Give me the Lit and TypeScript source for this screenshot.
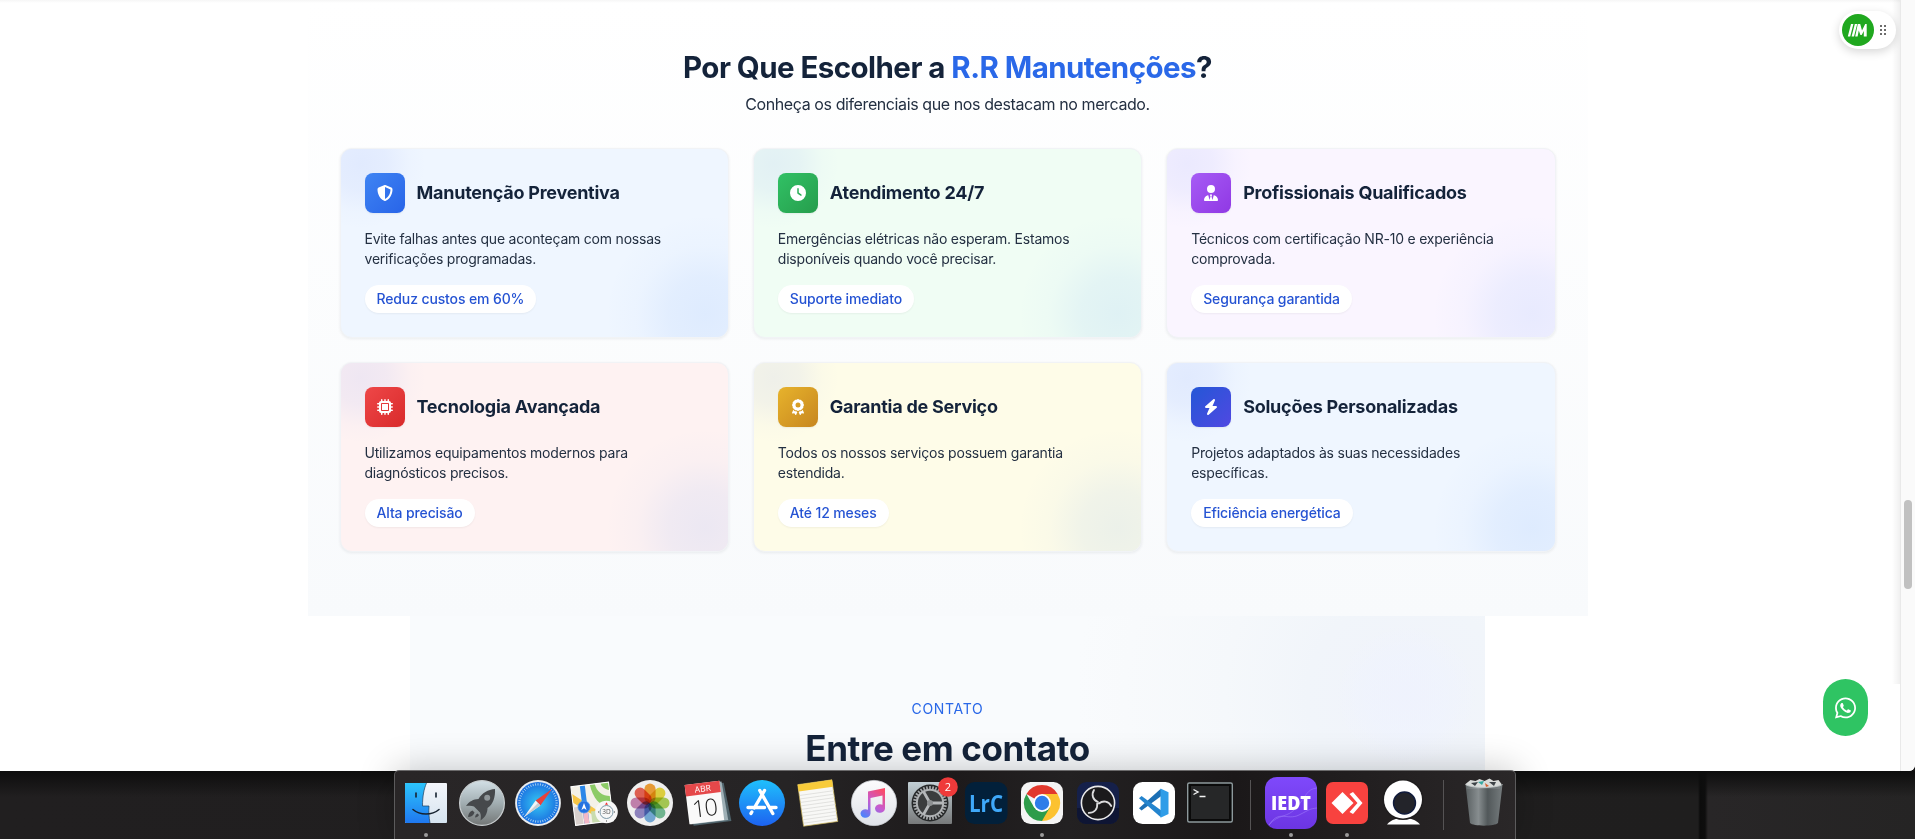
import { LitElement, html, svg, css } from "lit";
import { customElement, property } from "lit/decorators.js";
import { classMap } from "lit/directives/class-map.js";

const ICONS: Record<string, { w: number; d: string }> = {
  shield: { w: 512, d: "M256 0c4.6 0 9.2 1 13.4 2.9L457.7 82.8c22 9.3 38.4 31 38.3 57.2c-.5 99.2-41.3 280.7-213.6 363.2c-16.7 8-36.1 8-52.8 0C57.3 420.7 16.5 239.2 16 140c-.1-26.2 16.3-47.9 38.3-57.2L242.7 2.9C246.8 1 251.4 0 256 0zm0 66.8V444.8C394 378 431.1 230.1 432 141.4L256 66.8l0 0z" },
  clock: { w: 512, d: "M256 0a256 256 0 1 1 0 512A256 256 0 1 1 256 0zM232 120V256c0 8 4 15.5 10.7 20l96 64c11 7.4 25.9 4.4 33.3-6.7s4.4-25.9-6.7-33.3L280 243.2V120c0-13.3-10.7-24-24-24s-24 10.7-24 24z" },
  tie: { w: 448, d: "M96 128a128 128 0 1 0 256 0A128 128 0 1 0 96 128zm94.5 200.2l18.6 31L175.8 483.1l-36-146.9c-2-8.1-9.8-13.4-17.9-11.3C51.9 342.4 0 405.8 0 481.3c0 17 13.8 30.7 30.7 30.7H162.5c0 0 0 0 .1 0H168 280h5.5c0 0 0 0 .1 0H417.3c17 0 30.7-13.8 30.7-30.7c0-75.5-51.9-138.9-121.9-156.4c-8.1-2-15.9 3.3-17.9 11.3l-36 146.9L238.9 359.2l18.6-31c6.4-10.7-1.3-24.2-13.7-24.2H224 204.3c-12.4 0-20.1 13.6-13.7 24.2z" },
  chip: { w: 512, d: "M176 24c0-13.3-10.7-24-24-24s-24 10.7-24 24V64c-35.3 0-64 28.7-64 64H24c-13.3 0-24 10.7-24 24s10.7 24 24 24H64v56H24c-13.3 0-24 10.7-24 24s10.7 24 24 24H64v56H24c-13.3 0-24 10.7-24 24s10.7 24 24 24H64c0 35.3 28.7 64 64 64v40c0 13.3 10.7 24 24 24s24-10.7 24-24V448h56v40c0 13.3 10.7 24 24 24s24-10.7 24-24V448h56v40c0 13.3 10.7 24 24 24s24-10.7 24-24V448c35.3 0 64-28.7 64-64h40c13.3 0 24-10.7 24-24s-10.7-24-24-24H448V280h40c13.3 0 24-10.7 24-24s-10.7-24-24-24H448V176h40c13.3 0 24-10.7 24-24s-10.7-24-24-24H448c0-35.3-28.7-64-64-64V24c0-13.3-10.7-24-24-24s-24 10.7-24 24V64H280V24c0-13.3-10.7-24-24-24s-24 10.7-24 24V64H176V24zM160 128H352c17.7 0 32 14.3 32 32V352c0 17.7-14.3 32-32 32H160c-17.7 0-32-14.3-32-32V160c0-17.7 14.3-32 32-32zm192 32H160V352H352V160z" },
  award: { w: 384, d: "M173.8 5.5c11-7.3 25.4-7.3 36.4 0L228 17.2c6 3.9 13 5.8 20.1 5.4l21.3-1.3c13.2-.8 25.6 6.4 31.5 18.2l9.6 19.1c3.2 6.4 8.4 11.5 14.7 14.7L344.5 83c11.8 5.9 19 18.3 18.2 31.5l-1.3 21.3c-.4 7.1 1.5 14.2 5.4 20.1l11.8 17.8c7.3 11 7.3 25.4 0 36.4L366.8 228c-3.9 6-5.8 13-5.4 20.1l1.3 21.3c.8 13.2-6.4 25.6-18.2 31.5l-19.1 9.6c-6.4 3.2-11.5 8.4-14.7 14.7L301 344.5c-5.9 11.8-18.3 19-31.5 18.2l-21.3-1.3c-7.1-.4-14.2 1.5-20.1 5.4l-17.8 11.8c-11 7.3-25.4 7.3-36.4 0L156 366.8c-6-3.9-13-5.8-20.1-5.4l-21.3 1.3c-13.2 .8-25.6-6.4-31.5-18.2l-9.6-19.1c-3.2-6.4-8.4-11.5-14.7-14.7L39.5 301c-11.8-5.9-19-18.3-18.2-31.5l1.3-21.3c.4-7.1-1.5-14.2-5.4-20.1L5.5 210.2c-7.3-11-7.3-25.4 0-36.4L17.2 156c3.9-6 5.8-13 5.4-20.1l-1.3-21.3c-.8-13.2 6.4-25.6 18.2-31.5l19.1-9.6C65 70.2 70.2 65 73.4 58.6L83 39.5c5.9-11.8 18.3-19 31.5-18.2l21.3 1.3c7.1 .4 14.2-1.5 20.1-5.4L173.8 5.5zM272 192a80 80 0 1 0 -160 0 80 80 0 1 0 160 0zM1.3 441.8L44.4 339.3c.2 .1 .3 .2 .4 .4l9.6 19.1c11.7 23.2 36 37.3 62 35.8l21.3-1.3c.2 0 .5 0 .7 .2l17.8 11.8c5.1 3.3 10.5 5.9 16.1 7.7l-37.6 89.3c-2.3 5.5-7.4 9.2-13.3 9.7s-11.6-2.2-14.8-7.2L74.4 455.5l-56.1 8.3c-5.7 .8-11.4-1.5-15-6s-4.3-10.7-2.1-16zm248 60.4L211.7 413c5.6-1.8 11-4.3 16.1-7.7l17.8-11.8c.2-.1 .4-.2 .7-.2l21.3 1.3c26 1.5 50.3-12.6 62-35.8l9.6-19.1c.1-.2 .2-.3 .4-.4l43.2 102.5c2.2 5.3 1.4 11.4-2.1 16s-9.3 6.9-15 6l-56.1-8.3-32.2 49.2c-3.2 5-8.9 7.7-14.8 7.2s-11-4.3-13.3-9.7z" },
  bolt: { w: 448, d: "M349.4 44.6c5.9-13.7 1.5-29.7-10.6-38.5s-28.6-8-39.9 1.8l-256 224c-10 8.8-13.6 22.9-8.9 35.3S50.7 288 64 288H175.5L98.6 467.4c-5.9 13.7-1.5 29.7 10.6 38.5s28.6 8 39.9-1.8l256-224c10-8.8 13.6-22.9 8.9-35.3s-16.6-20.7-30-20.7H272.5L349.4 44.6z" },
};

const CARDS = [
  { tone: "blue", icon: "shield", title: "Manutenção Preventiva", text: "Evite falhas antes que aconteçam com nossas verificações programadas.", tag: "Reduz custos em 60%" },
  { tone: "green", icon: "clock", title: "Atendimento 24/7", text: "Emergências elétricas não esperam. Estamos disponíveis quando você precisar.", tag: "Suporte imediato" },
  { tone: "purple", icon: "tie", title: "Profissionais Qualificados", text: "Técnicos com certificação NR-10 e experiência comprovada.", tag: "Segurança garantida" },
  { tone: "red", icon: "chip", title: "Tecnologia Avançada", text: "Utilizamos equipamentos modernos para diagnósticos precisos.", tag: "Alta precisão" },
  { tone: "yellow", icon: "award", title: "Garantia de Serviço", text: "Todos os nossos serviços possuem garantia estendida.", tag: "Até 12 meses" },
  { tone: "indigo", icon: "bolt", title: "Soluções Personalizadas", text: "Projetos adaptados às suas necessidades específicas.", tag: "Eficiência energética" },
];

@customElement("feature-card")
class FeatureCard extends LitElement {
  @property() tone = "blue";
  @property() icon = "shield";
  @property() heading = "";
  @property() text = "";
  @property() tag = "";

  static styles = css`
    :host { display: block; }
    .card {
      position: relative; overflow: hidden; box-sizing: border-box; height: 190px;
      padding: 24px; border: 1px solid #f1f3f6; border-radius: 12px;
      box-shadow: 0 1px 3px rgba(15, 23, 42, 0.07);
    }
    .glow { position: absolute; border-radius: 50%; }
    .glow.start {
      width: 130px; height: 130px; left: -45px; top: -50px;
      background: radial-gradient(circle closest-side, rgba(90, 120, 245, 0.095), rgba(90, 120, 245, 0.07) 40%, rgba(90, 120, 245, 0.016) 75%, transparent);
    }
    .glow.end {
      width: 210px; height: 210px; right: -82px; bottom: -82px;
      background: radial-gradient(circle closest-side, rgba(59, 130, 246, 0.095), rgba(59, 130, 246, 0.07) 35%, rgba(59, 130, 246, 0.018) 65%, transparent 95%);
    }
    .body { position: relative; display: flex; flex-direction: column; align-items: flex-start; gap: 16px; }
    .head { display: flex; align-items: center; gap: 12px; }
    .tile {
      display: flex; align-items: center; justify-content: center;
      width: 40px; height: 40px; border-radius: 8px; box-shadow: 0 1px 2px rgba(0, 0, 0, 0.06);
    }
    .tile svg { display: block; height: 16px; fill: #fff; fill-rule: nonzero; }
    .title { margin: 0; font-size: 18px; line-height: 28px; font-weight: 700; letter-spacing: -0.25px; color: #14233a; white-space: nowrap; }
    .text { margin: 0; width: 320px; font-size: 14px; line-height: 20px; letter-spacing: -0.21px; color: #243042; }
    .tag {
      font-size: 14px; line-height: 20px; padding: 4px 12px; border-radius: 14px; letter-spacing: -0.13px;
      font-weight: 500; color: #2553d3; background: #fff; box-shadow: 0 1px 2px rgba(0, 0, 0, 0.05);
    }
    .blue, .indigo { background: #eff6ff; }
    .green { background: #f0fdf4; }
    .purple { background: #faf5ff; }
    .red { background: #fef2f2; }
    .yellow { background: #fefce8; }
    .blue .tile { background: linear-gradient(135deg, #3f84f3, #2864e8); }
    .green .tile { background: linear-gradient(135deg, #31c165, #269d4c); }
    .purple .tile { background: linear-gradient(135deg, #a65cf5, #9038e4); }
    .red .tile { background: linear-gradient(135deg, #ee4748, #d92a2b); }
    .yellow .tile { background: linear-gradient(135deg, #e7b32c, #c7861f); }
    .indigo .tile { background: linear-gradient(135deg, #2457d6, #5048e2); }
  `;

  render() {
    const icon = ICONS[this.icon];
    return html`
      <article class="card ${this.tone}">
        <div class="glow start"></div>
        <div class="glow end"></div>
        <div class="body">
          <div class="head">
            <div class="tile"><svg viewBox="0 0 ${icon.w} 512"><path d=${icon.d}></path></svg></div>
            <h3 class="title">${this.heading}</h3>
          </div>
          <p class="text">${this.text}</p>
          <span class="tag">${this.tag}</span>
        </div>
      </article>
    `;
  }
}

const ticks = (n: number, r1: number, r2: number) =>
  Array.from({ length: n }, (_, i) => {
    const a = (i / n) * Math.PI * 2;
    const c = Math.cos(a);
    const s = Math.sin(a);
    return `M${28 + c * r1} ${28 + s * r1}L${28 + c * r2} ${28 + s * r2}`;
  }).join("");

const PETALS = ["#f59a23", "#e9d730", "#a5cd46", "#68b98e", "#6ba7dc", "#8d80c4", "#c77aae", "#ea5545"];

const DOCK = {
  finder: svg`
    <defs>
      <linearGradient id="a" x2="0" y2="1"><stop stop-color="#2cc4fb"/><stop offset="1" stop-color="#1f78f0"/></linearGradient>
      <linearGradient id="b" x2="0" y2="1"><stop stop-color="#f4f6fb"/><stop offset="1" stop-color="#d6e4f0"/></linearGradient>
    </defs>
    <rect x="7" y="8" width="42" height="40" rx="1" fill="url(#b)"/>
    <path d="M8 8H28.500C26 14 24.500 21 24.500 31H31C30.500 37 31 42 32 48H8a1 1 0 0 1-1-1V9a1 1 0 0 1 1-1z" fill="url(#a)"/>
    <path d="M28.500 8C26 14 24.500 21 24.500 31H31C30.500 37 31 42 32 48" fill="none" stroke="#1c3d5c" stroke-width=".7"/>
    <path d="M18 18v4M38 18v4" stroke="#16222f" stroke-width="1.600" stroke-linecap="round"/>
    <path d="M15 34.500c7 6 19 6 26 0" fill="none" stroke="#16222f" stroke-width="1.600" stroke-linecap="round"/>`,
  launchpad: svg`
    <defs><linearGradient id="a" x2="0" y2="1"><stop stop-color="#d3e0e6"/><stop offset=".5" stop-color="#a2aeb2"/><stop offset="1" stop-color="#737676"/></linearGradient></defs>
    <circle cx="28" cy="28" r="22.400" fill="url(#a)" stroke="#c9ced0" stroke-width="1.200"/>
    <path d="M41 14c-7 .5-13 4-16.500 10-5 .2-9.500 2.500-12.500 7 3-.5 6-.5 8 .5l6 6c1.200 2.500 1 5 .5 8 4.500-3 7-7 7-12.500C39 29.500 41.500 22 41 14z" fill="#46494c"/>
    <circle cx="33.200" cy="22.800" r="3" fill="#8f9699"/>
    <path d="M18.500 35.500c-3 1-4 3.500-4.500 6.500 3 0 5.500-1.500 6.500-4.500z" fill="#46494c"/>
    <path d="M23.500 38.500c-1.500.7-2.300 2-2.500 4 2 0 3.300-1 4-2.500z" fill="#46494c"/>`,
  safari: svg`
    <defs><radialGradient id="a"><stop stop-color="#35c8f3"/><stop offset="1" stop-color="#1a6fe0"/></radialGradient></defs>
    <circle cx="28" cy="28" r="22.900" fill="#e9ecef"/>
    <circle cx="28" cy="28" r="21" fill="url(#a)"/>
    <path d=${ticks(48, 17.5, 19.8)} stroke="#d7f0fc" stroke-width=".7"/>
    <path d="M42 14L25.600 25.600 30.400 30.400z" fill="#e8413c"/>
    <path d="M14 42L25.600 25.600 30.400 30.400z" fill="#f2f4f6"/>
    <path d="M14 42L30.400 30.400 28 28z" fill="#c9ccd0"/>`,
  maps: svg`
    <g transform="rotate(-7 28 28)">
      <rect x="7" y="9" width="38" height="39" fill="#f4f1e8"/>
      <path d="M26 9H45V32C36 34 28 26 26 9z" fill="#8ccb66"/>
      <path d="M31 9c1 8 6 13 14 14v-6c-4-1-8-4-8-8z" fill="#f4f1e8"/>
      <path d="M7 16l38 32H36L7 25z" fill="#f6c546"/>
      <path d="M7 30h8v18H7z" fill="#d8d0cd"/><path d="M24 36h10v12H24z" fill="#c9dcaf"/>
      <path d="M16 9h5v39h-5z" fill="#2b87e8"/><path d="M16 36h5v12h-5z" fill="#f3b8c6"/>
      <rect x="7" y="9" width="38" height="39" fill="none" stroke="#fff" stroke-width="1"/>
    </g>
    <circle cx="18" cy="32" r="6" fill="#2573e0" stroke="#4b97f0" stroke-width=".8"/>
    <path d="M18 28l2.600 7-2.600-1.800-2.600 1.800z" fill="#fff"/>
    <circle cx="40.500" cy="37" r="11.300" fill="#f7f7f7"/>
    <circle cx="40.500" cy="37" r="6.500" fill="none" stroke="#7c98a8" stroke-width="1"/>
    <path d="M40.500 27.200l1.500 2.600h-3z" fill="#e33"/>
    <path d="M32 37h1M48 37h1M40.500 45.500v1" stroke="#444" stroke-width="1"/>
    <text x="40.500" y="39.400" font-size="6.500" fill="#555" text-anchor="middle">3D</text>`,
  photos: svg`
    <circle cx="28" cy="28" r="23" fill="#efefef"/>
    ${PETALS.map((c, i) => svg`<rect x="22.400" y="8.500" width="11.200" height="19.500" rx="5.600" fill=${c} fill-opacity=".9" style="mix-blend-mode:multiply" transform="rotate(${i * 45} 28 28)"/>`)}`,
  calendar: svg`
    <g transform="rotate(-7 28 28)">
      <path d="M10 10h38l3 39H13z" fill="#50646c"/>
      <path d="M10 8.500h36l2 39H10z" fill="#9fb0b6"/>
      <path d="M9 7.500h35v39.500H9z" fill="#fafafa"/>
      <path d="M9 7.500h35v11.500H9z" fill="#e5484a"/>
      <text x="26.500" y="16.400" font-size="8.500" fill="#fff" text-anchor="middle">ABR</text>
      <text x="26" y="41" font-size="23.500" font-weight="300" fill="#222" text-anchor="middle" letter-spacing="-1">10</text>
    </g>`,
  appstore: svg`
    <defs><linearGradient id="a" x2="0" y2="1"><stop stop-color="#1fc0fc"/><stop offset="1" stop-color="#1d62f0"/></linearGradient></defs>
    <circle cx="28" cy="28" r="23" fill="url(#a)"/>
    <path d="M30.500 15.500L20.300 33M17.800 37l-.8 1.400M25.800 15.500L38.800 38.500M14 32.500h16.500M36 32.500h6" stroke="#fff" stroke-width="3.400" stroke-linecap="round"/>`,
  notes: svg`
    <g transform="rotate(-8 28 28)">
      <path d="M10.500 7H45v42H10.500z" fill="#f8f8f6" stroke="#c9b257" stroke-width=".7"/>
      <path d="M10.500 7H45v7H10.500z" fill="#f8cb3a"/>
      <path d="M11 18h34M11 21.500h34M11 25h34M11 28.500h34M11 32h34M11 35.500h34M11 39h34M11 42.500h34M11 46h34" stroke="#d9d9d6" stroke-width=".7"/>
    </g>`,
  itunes: svg`
    <defs><linearGradient id="a" x1=".8" y1="0" x2=".2" y2="1"><stop stop-color="#fb4a68"/><stop offset=".5" stop-color="#c65bd0"/><stop offset="1" stop-color="#4f83fb"/></linearGradient>
    <linearGradient id="b" x2="0" y2="1"><stop stop-color="#fcfcfd"/><stop offset="1" stop-color="#dfe2e8"/></linearGradient></defs>
    <circle cx="28" cy="28" r="22.600" fill="url(#b)" stroke="#cdd0d6" stroke-width=".8"/>
    <path d="M22 16.500L39 13v20.500a5 4.300 0 1 1-2.500-3.700V20.500L24.500 23v15.500a5 4.300 0 1 1-2.500-3.700z" fill="url(#a)"/>`,
  settings: svg`
    <defs><linearGradient id="a" x2="0" y2="1"><stop stop-color="#c3d0d6"/><stop offset="1" stop-color="#77797a"/></linearGradient></defs>
    <rect x="6" y="7" width="44" height="42" rx="1" fill="url(#a)"/>
    <circle cx="28" cy="28" r="18.500" fill="#262829"/>
    <path d=${ticks(32, 13.5, 17)} stroke="#a4a7a9" stroke-width="1.700"/>
    <circle cx="28" cy="28" r="13.200" fill="#3b3d3e" stroke="#b0b3b5" stroke-width="2"/>
    <path d="M28 28h13M28 28l-6.500-11.500M28 28l-6.500 11.500" stroke="#b4b7b9" stroke-width="2.800"/>
    <circle cx="28" cy="28" r="3" fill="#8d9092"/>
    <circle cx="46" cy="12" r="9.800" fill="#ef3a3a"/>
    <text x="46" y="15.800" font-size="11" fill="#fff" text-anchor="middle">2</text>`,
  lrc: svg`
    <rect x="7" y="7" width="42.500" height="42" rx="9.500" fill="#02203a"/>
    <text x="28" y="37" font-size="24" font-weight="700" fill="#3fa9fa" text-anchor="middle" textLength="34" lengthAdjust="spacingAndGlyphs">LrC</text>`,
  chrome: svg`
    <rect x="7" y="7" width="42" height="42" rx="9.500" fill="#f4f4f4"/>
    <path d="M28 28L12.400 19A18 18 0 0 1 43.600 19z" fill="#e2382c"/>
    <path d="M28 28V19H43.600A18 18 0 0 1 28 46z" fill="#fcc230"/>
    <path d="M28 46A18 18 0 0 1 12.400 19L20.200 32.500 28 36.500 35.800 32.500z" fill="#2d9c4a"/>
    <circle cx="28" cy="28" r="9" fill="#fff"/><circle cx="28" cy="28" r="7.200" fill="#2e7de9"/>`,
  obs: svg`
    <rect x="7" y="7" width="42" height="42" rx="9.500" fill="#15204a"/>
    <path d="M7 33h42v7a9 9 0 0 1-9 9H16a9 9 0 0 1-9-9z" fill="#0e1534"/>
    <circle cx="28" cy="28" r="16.600" fill="#1b1a1c" stroke="#e9e9ea" stroke-width="1.600"/>
    <g fill="none" stroke="#dcdcde" stroke-width="1.800" stroke-linecap="round">
      <path d="M28 27c-5-2-7-7-4-12"/><path d="M28 27c-5-2-7-7-4-12" transform="rotate(120 28 28)"/><path d="M28 27c-5-2-7-7-4-12" transform="rotate(240 28 28)"/>
    </g>`,
  vscode: svg`
    <rect x="7" y="7" width="42" height="42" rx="9.500" fill="#fff"/>
    <path d="M34.500 14L13 33.200l2.600 2.300L38 19z" fill="#1b6fb5"/>
    <path d="M34.500 42L13 23.300l2.600-2.300L38 37.500z" fill="#2384ce"/>
    <path d="M34.500 13.500L42.500 17.200V39L34.500 42.700z" fill="#2f9de8"/>`,
  terminal: svg`
    <rect x="5.700" y="8" width="44.600" height="39" rx="1.500" fill="#0a0a0a" stroke="#8d999c" stroke-width="1.400"/>
    <rect x="9" y="11" width="38" height="33" fill="#262728"/>
    <path d="M11.500 14.500l4.500 2.500-4.500 2.500M17.500 21.500h6" fill="none" stroke="#f2f2f2" stroke-width="1.400"/>`,
  iedt: svg`
    <defs><linearGradient id="a" x2="0" y2="1"><stop stop-color="#7f49fb"/><stop offset="1" stop-color="#6c35e2"/></linearGradient></defs>
    <rect x="2" y="2" width="52" height="52" rx="12" fill="url(#a)"/>
    <path d="M6 50c10-16 18-4 30-10s10-6 18-7" fill="none" stroke="#a17dfb" stroke-opacity=".7" stroke-width=".8"/>
    <path d="M6 50C16 38 24 44 34 32s10-18 20-19" fill="none" stroke="#9d78fa" stroke-opacity=".7" stroke-width=".8"/>
    <text x="28" y="35" font-size="19" font-weight="800" fill="#fff" text-anchor="middle" textLength="40" lengthAdjust="spacingAndGlyphs">IEDT</text>`,
  anydesk: svg`
    <rect x="7" y="7" width="42" height="42" rx="7" fill="#f8423f"/>
    <path d="M12.500 28L23.500 17 34.500 28 23.500 39z" fill="#fff"/>
    <path d="M30.500 19L34 17 43.500 28 34 39 30.500 37 38.500 28z" fill="#fff"/>`,
  webcam: svg`
    <path d="M12 49.500c4-5 10-6.500 16.500-6.500s12.500 1.500 16.500 6.500z" fill="#fff"/>
    <circle cx="28" cy="24.500" r="20.500" fill="#1f1d1e"/><circle cx="28" cy="24.500" r="19" fill="#fff"/>
    <circle cx="29.500" cy="28" r="11" fill="#23242a" stroke="#101b3c" stroke-width="1.400"/>`,
  trash: svg`
    <defs><linearGradient id="a"><stop stop-color="#5c6365"/><stop offset=".35" stop-color="#8e9597"/><stop offset=".6" stop-color="#555c5e"/><stop offset="1" stop-color="#7b8284"/></linearGradient></defs>
    <path d="M9.500 9l5-4 5 1 4-2 5 2 5-2.500 4 2.500 5-1 3 4-2 5H11z" fill="#d9dcda"/>
    <path d="M15 8l4 3 3-4zM33 7l5 4 2-4z" fill="#3d4347"/><path d="M22 7l4 3 2-4z" fill="#36a8a0"/><path d="M29 8l4 3-3 1z" fill="#d85f2c"/>
    <path d="M9.500 9.500c6 4 31 4 37 0L42 48c-3 3.500-25 3.500-28 0z" fill="url(#a)" fill-opacity=".93"/>
    <path d="M9.500 9.500c6 4 31 4 37 0" fill="none" stroke="#c2c8ca" stroke-width=".9"/>`,
};

const DOCK_GROUPS = [
  ["finder", "launchpad", "safari", "maps", "photos", "calendar", "appstore", "notes", "itunes", "settings", "lrc", "chrome", "obs", "vscode", "terminal"],
  ["iedt", "anydesk", "webcam"],
  ["trash"],
];
const RUNNING = new Set(["finder", "chrome", "iedt", "anydesk"]);

@customElement("dock-icon")
class DockIcon extends LitElement {
  @property() name = "finder";
  @property({ type: Boolean }) running = false;

  static styles = css`
    :host { display: flex; flex-direction: column; align-items: center; gap: 2px; width: 56px; padding-top: 4px; }
    svg { display: block; width: 56px; height: 56px; overflow: visible; font-family: "Open Sans", "Noto Sans", sans-serif; }
    .dot { width: 4px; height: 4px; border-radius: 50%; }
    .on { background: #9b9a9a; }
  `;

  render() {
    return html`
      <svg viewBox="0 0 56 56">${DOCK[this.name as keyof typeof DOCK]}</svg>
      <i class=${classMap({ dot: true, on: this.running })}></i>
    `;
  }
}

@customElement("app-root")
class AppRoot extends LitElement {
  static styles = css`
    :host { display: block; font-family: Inter, "Liberation Sans", sans-serif; }
    .screen { position: relative; display: flex; flex-direction: column; width: 100%; height: 839px; overflow: hidden; background: #1d1b1c; }
    .window { display: flex; flex: none; height: 771px; background: #fff; border-radius: 0 0 6px 0; overflow: hidden; box-shadow: 0 2px 16px rgba(0, 0, 0, 0.8); }
    .page { position: relative; flex: 1; display: flex; flex-direction: column; align-items: center; box-sizing: border-box; padding-right: 5px; overflow: hidden; background: linear-gradient(#f6f6f6, #fff 3px); }
    .edge { position: absolute; right: 0; top: 0; width: 8px; height: 684px; background: linear-gradient(90deg, transparent, rgba(0, 0, 0, 0.06)); }
    .scrollbar { box-sizing: border-box; width: 15px; border-left: 1px solid #e9e9e9; background: #fafafa; padding: 500px 3px 0; }
    .thumb { height: 89px; border-radius: 4px; background: #c1c1c1; }
    .why { box-sizing: border-box; flex: none; width: 1280px; height: 616px; padding: 49px 32px 64px; background: linear-gradient(rgba(255, 255, 255, 0), #f8fafc); text-align: center; }
    .why-title { margin: 0 0 7px; font-size: 29.5px; line-height: 36px; font-weight: 700; letter-spacing: -0.55px; color: #14233a; }
    .brand { color: #2a68e8; }
    .lead { margin: 0 0 32px; font-size: 16px; line-height: 24px; letter-spacing: -0.4px; color: #243042; }
    .grid { display: grid; grid-template-columns: repeat(3, 1fr); gap: 24px; text-align: left; }
    .contact {
      box-sizing: border-box; flex: none; width: 1075px; height: 400px; padding-top: 83px; text-align: center;
      background:
        radial-gradient(circle 72px at 996px 80px, rgba(238, 242, 255, 0.6), rgba(239, 243, 255, 0.5) 60%, rgba(239, 243, 255, 0)),
        radial-gradient(circle 330px at 996px 80px, #f0f3fa, #f1f5fa 30%, #f5f8fb 55%, #f8fafc 85%, #f9fbfd);
    }
    .eyebrow { margin: 0 0 9px; font-size: 14px; line-height: 20px; letter-spacing: 0.7px; color: #2a68e8; }
    .contact-title { margin: 0; font-size: 35px; line-height: 40px; font-weight: 700; letter-spacing: -0.38px; color: #14233a; }
    .helper { position: absolute; right: 4px; top: 11px; display: flex; align-items: center; box-sizing: border-box; gap: 6px; width: 57px; height: 38px; padding-left: 3px; border-radius: 19px; background: #fff; box-shadow: 0 3px 10px rgba(0, 0, 0, 0.16); }
    .helper svg { display: block; width: 32px; height: 32px; }
    .grip { display: grid; grid-template-columns: 2px 2px; gap: 2px; }
    .grip i { width: 2px; height: 2px; background: #6c6c6c; }
    .chat { position: absolute; right: 32px; top: 679px; display: flex; align-items: center; justify-content: center; width: 45px; height: 57px; border-radius: 22.500px; background: #2fc463; }
    .chat svg { display: block; width: 21px; height: 24px; fill: #fff; }
    .desktop { flex: 1; display: flex; justify-content: center; padding-right: 5px;
      background: linear-gradient(#0d0d0d, transparent 26px), linear-gradient(90deg, #211f20 0, #1f1e1e 1698px, #0c0c0c 1700px, #0e0e0e 1705px, #282627 1708px, #252424 100%); }
    .dock { position: relative; display: flex; box-sizing: border-box; height: 72px; margin-top: -1px; padding: 0 3px; border: 1px solid #5c5b5c; border-top: 1px solid #6b6a6b; border-radius: 5px 5px 0 0; background: linear-gradient(90deg, #292627, #262425 35%, #1d1a1b 50%, #232122 60%, #1b1819 75%, #2a2728); box-shadow: 0 0 36px rgba(0, 0, 0, 0.23); }
    .sep { width: 1px; height: 50px; margin: 9px 12px 0; background: #555354; }
  `;

  render() {
    return html`
      <div class="screen">
        <div class="window">
          <main class="page">
            <section class="why">
              <h2 class="why-title">Por Que Escolher a <span class="brand">R.R Manutenções</span>?</h2>
              <p class="lead">Conheça os diferenciais que nos destacam no mercado.</p>
              <div class="grid">
                ${CARDS.map((c) => html`<feature-card tone=${c.tone} icon=${c.icon} heading=${c.title} text=${c.text} tag=${c.tag}></feature-card>`)}
              </div>
            </section>
            <section class="contact">
              <p class="eyebrow">CONTATO</p>
              <h2 class="contact-title">Entre em contato</h2>
            </section>
            <div class="edge"></div>
            <div class="helper">
              <svg viewBox="0 0 32 32">
                <circle cx="16" cy="16" r="16" fill="#20a81f"></circle>
                <path d="M9 10h2.400L8.200 22.500H5.800zM12.800 10h2.400L12 22.500H9.600zM15.800 10h2.400l1.800 6.500 3.200-6.500h1.500v12.500h-2.900v-5.500l-2.100 4h-1.300l-1.600-4.500-1.200 6h-2.400z" fill="#fff"></path>
              </svg>
              <div class="grip"><i></i><i></i><i></i><i></i><i></i><i></i></div>
            </div>
            <div class="chat">
              <svg viewBox="0 0 448 512"><path d="M380.900 97.100C339 55.100 283.200 32 223.900 32c-122.400 0-222 99.600-222 222 0 39.100 10.200 77.300 29.600 111L0 480l117.700-30.900c32.400 17.700 68.900 27 106.100 27h.1c122.300 0 224.100-99.600 224.100-222 0-59.300-25.200-115-67.100-157zm-157 341.600c-33.200 0-65.700-8.900-94-25.700l-6.700-4-69.800 18.300L72 359.200l-4.400-7c-18.500-29.400-28.200-63.300-28.200-98.200 0-101.700 82.800-184.500 184.600-184.500 49.300 0 95.600 19.200 130.400 54.100 34.800 34.900 56.200 81.200 56.100 130.500 0 101.800-84.900 184.600-186.600 184.600zm101.200-138.200c-5.500-2.800-32.800-16.200-37.900-18-5.100-1.900-8.800-2.800-12.500 2.800-3.700 5.600-14.300 18-17.600 21.800-3.200 3.700-6.500 4.200-12 1.400-32.600-16.300-54-29.100-75.500-66-5.700-9.800 5.700-9.100 16.300-30.300 1.800-3.700.9-6.900-.5-9.700-1.400-2.800-12.500-30.100-17.100-41.200-4.500-10.800-9.100-9.300-12.500-9.500-3.200-.2-6.900-.2-10.600-.2-3.700 0-9.700 1.400-14.800 6.900-5.100 5.600-19.400 19-19.400 46.300 0 27.300 19.900 53.700 22.600 57.400 2.800 3.700 39.100 59.700 94.800 83.800 35.200 15.200 49 16.500 66.600 13.900 10.700-1.600 32.800-13.400 37.400-26.400 4.600-13 4.600-24.100 3.200-26.400-1.300-2.500-5-3.900-10.500-6.600z"></path></svg>
            </div>
          </main>
          <div class="scrollbar"><div class="thumb"></div></div>
        </div>
        <div class="desktop">
          <nav class="dock">
            ${DOCK_GROUPS.map((group, i) => html`
              ${i ? html`<span class="sep"></span>` : ""}
              ${group.map((n) => html`<dock-icon name=${n} ?running=${RUNNING.has(n)}></dock-icon>`)}
            `)}
          </nav>
        </div>
      </div>
    `;
  }
}
